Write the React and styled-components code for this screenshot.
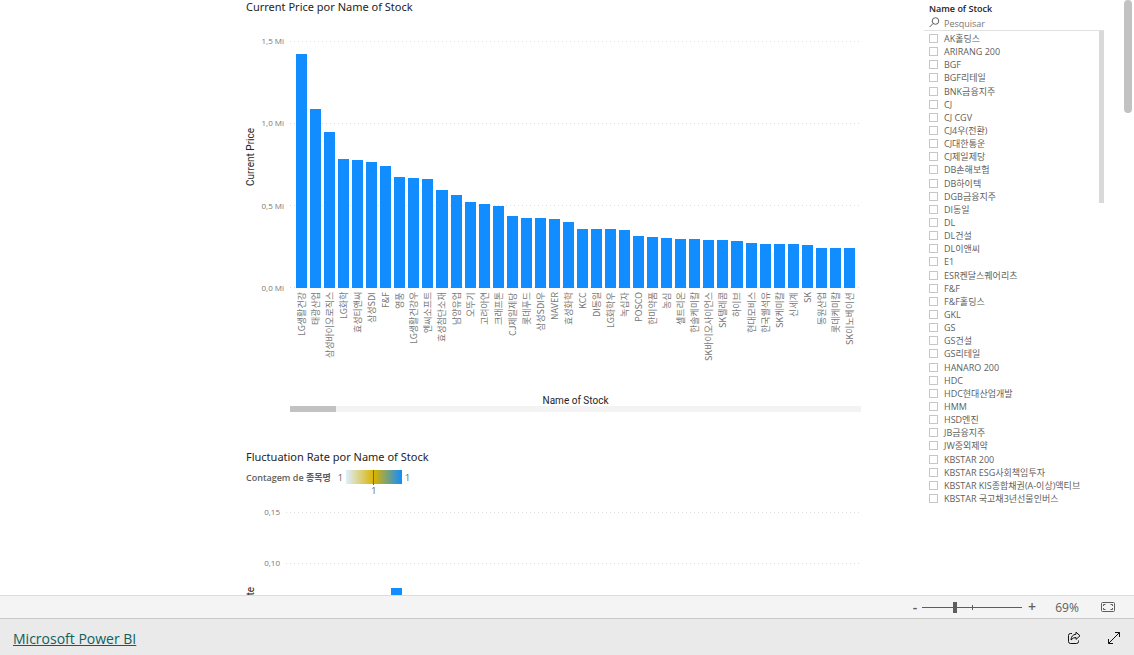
import styled, { createGlobalStyle } from "styled-components";

const prices = [
  ["LG생활건강", 1422],
  ["태광산업", 1088],
  ["삼성바이오로직스", 949],
  ["LG화학", 785],
  ["효성티앤씨", 775],
  ["삼성SDI", 766],
  ["F&F", 744],
  ["영풍", 673],
  ["LG생활건강우", 670],
  ["엔씨소프트", 661],
  ["효성첨단소재", 593],
  ["남양유업", 563],
  ["오뚜기", 520],
  ["고려아연", 508],
  ["크래프톤", 498],
  ["CJ제일제당", 440],
  ["롯데푸드", 425],
  ["삼성SDI우", 423],
  ["NAVER", 422],
  ["효성화학", 403],
  ["KCC", 360],
  ["DI동일", 359],
  ["LG화학우", 357],
  ["녹십자", 351],
  ["POSCO", 317],
  ["한미약품", 308],
  ["농심", 301],
  ["셀트리온", 298],
  ["한솔케미칼", 296],
  ["SK바이오사이언스", 292],
  ["SK텔레콤", 290],
  ["하이브", 286],
  ["현대모비스", 272],
  ["한국쉘석유", 270],
  ["SK케미칼", 269],
  ["신세계", 267],
  ["SK", 263],
  ["동원산업", 244],
  ["롯데케미칼", 243],
  ["SK이노베이션", 241],
];

const stocks = [
  "AK홀딩스",
  "ARIRANG 200",
  "BGF",
  "BGF리테일",
  "BNK금융지주",
  "CJ",
  "CJ CGV",
  "CJ4우(전환)",
  "CJ대한통운",
  "CJ제일제당",
  "DB손해보험",
  "DB하이텍",
  "DGB금융지주",
  "DI동일",
  "DL",
  "DL건설",
  "DL이앤씨",
  "E1",
  "ESR켄달스퀘어리츠",
  "F&F",
  "F&F홀딩스",
  "GKL",
  "GS",
  "GS건설",
  "GS리테일",
  "HANARO 200",
  "HDC",
  "HDC현대산업개발",
  "HMM",
  "HSD엔진",
  "JB금융지주",
  "JW중외제약",
  "KBSTAR 200",
  "KBSTAR ESG사회책임투자",
  "KBSTAR KIS종합채권(A-이상)액티브",
  "KBSTAR 국고채3년선물인버스",
];

const MAX_PRICE = 1500;

const App = () => {
  return (
    <Page>
      <GlobalStyle />
      <Report>
        <Visuals>
          <Title>Current Price por Name of Stock</Title>
          <PriceChart>
            <AxisTitle>Current Price</AxisTitle>
            <Ticks>
              <span>1,5 Mi</span>
              <span>1,0 Mi</span>
              <span>0,5 Mi</span>
              <span>0,0 Mi</span>
            </Ticks>
            <Plot>
              <GridLines>
                <GridLine />
                <GridLine />
                <GridLine />
                <GridLine />
              </GridLines>
              <Bars>
                {prices.map(([name, price]) => (
                  <Bar
                    key={name}
                    style={{ height: `${(price / MAX_PRICE) * 100}%` }}
                  />
                ))}
              </Bars>
            </Plot>
            <Categories>
              {prices.map(([name]) => (
                <Category key={name}>{name}</Category>
              ))}
            </Categories>
            <CategoryTitle>Name of Stock</CategoryTitle>
            <Track>
              <TrackThumb />
            </Track>
          </PriceChart>

          <Title>Fluctuation Rate por Name of Stock</Title>
          <Legend>
            <LegendName>Contagem de 종목명</LegendName>
            <span>1</span>
            <Gradient>
              <Middle>1</Middle>
            </Gradient>
            <span>1</span>
          </Legend>
          <RateChart>
            <RateTitle>Fluctuation Rate</RateTitle>
            <RateTicks>
              <span>0,15</span>
              <span>0,10</span>
            </RateTicks>
            <RatePlot>
              <GridLines>
                <GridLine />
                <GridLine />
                <GridLine />
              </GridLines>
              <RateBar />
            </RatePlot>
          </RateChart>
        </Visuals>

        <Slicer>
          <SlicerTitle>Name of Stock</SlicerTitle>
          <Search>
            <svg width="11" height="11" viewBox="0 0 11 11" fill="none">
              <circle cx="6.5" cy="4" r="3.3" stroke="#605e5c" />
              <path d="M4.2 6.4L0.6 10" stroke="#605e5c" />
            </svg>
            <input type="text" placeholder="Pesquisar" aria-label="Pesquisar" />
          </Search>
          <List>
            {stocks.map((name) => (
              <Option key={name}>
                <input type="checkbox" />
                {name}
              </Option>
            ))}
            <ListThumb />
          </List>
        </Slicer>
        <PageThumb />
      </Report>

      <StatusBar>
        <ZoomButton $width="14px" aria-label="Zoom out">
          -
        </ZoomButton>
        <ZoomRange>
          <input
            type="range"
            min="0"
            max="100"
            defaultValue="32"
            aria-label="Zoom"
          />
        </ZoomRange>
        <ZoomButton $width="20px" aria-label="Zoom in">
          +
        </ZoomButton>
        <ZoomValue>69%</ZoomValue>
        <IconButton aria-label="Fit to page">
          <svg width="14" height="10" viewBox="0 0 14 10" fill="none">
            <rect x="0.5" y="0.5" width="13" height="9" rx="1" stroke="#605e5c" />
            <path
              d="M2.5 4V2.5H4.5M9.5 2.5H11.5V4M11.5 6V7.5H9.5M4.5 7.5H2.5V6"
              stroke="#605e5c"
            />
          </svg>
        </IconButton>
      </StatusBar>

      <Footer>
        <a href="#powerbi">Microsoft Power BI</a>
        <Actions>
          <IconButton aria-label="Share">
            <svg width="14" height="14" viewBox="0 0 14 14" fill="none" stroke="#111">
              <path d="M5 2.5H3.5Q1.5 2.5 1.5 4.5V10.5Q1.5 12.5 3.5 12.5H9.5Q11.5 12.5 11.5 10.5V9.5" />
              <path
                d="M9 1.2L13 4.8L9 8.4V6.5Q6 6.3 4 9Q4.3 3.7 9 3.2Z"
                strokeLinejoin="round"
              />
            </svg>
          </IconButton>
          <IconButton aria-label="Full screen">
            <svg width="14" height="14" viewBox="0 0 14 14" fill="none" stroke="#111">
              <path d="M1.5 12.5L12.5 1.5M8 1.5H12.5V6M1.5 8V12.5H6" />
            </svg>
          </IconButton>
        </Actions>
      </Footer>
    </Page>
  );
};

export default App;

const GlobalStyle = createGlobalStyle`
  * {
    box-sizing: border-box;
  }
  body {
    margin: 0;
    background: #fff;
    color: #605e5c;
    font-family: "Open Sans", "Noto Sans CJK KR", sans-serif;
    font-size: 8px;
  }
  button {
    border: none;
    background: none;
    padding: 0;
    color: inherit;
    font-family: inherit;
    cursor: pointer;
  }
`;

const Page = styled.div`
  display: flex;
  flex-direction: column;
  height: 100vh;
`;

const Report = styled.main`
  position: relative;
  flex: 1;
  min-height: 0;
  overflow: hidden;
  display: grid;
  grid-template-columns: minmax(0, 1fr) 180px;
  column-gap: 63px;
  padding: 0 30px 0 246px;
`;

const Visuals = styled.section`
  min-width: 0;
`;

const Title = styled.h2`
  margin: 0;
  height: 14px;
  line-height: 14px;
  font-family: "Noto Sans", sans-serif;
  font-size: 11px;
  font-weight: 400;
  color: #252423;
`;

const PriceChart = styled.div`
  display: grid;
  grid-template-columns: 10px 28px minmax(0, 1fr);
  grid-template-rows: 247px 106px 12px 6px;
  column-gap: 3px;
  padding-top: 27px;
  margin-bottom: 38px;
`;

const AxisTitle = styled.div`
  grid-row: 1;
  align-self: center;
  justify-self: center;
  margin-bottom: 16px;
  writing-mode: vertical-rl;
  transform: rotate(180deg);
  font-family: Roboto, sans-serif;
  font-size: 10px;
  line-height: 10px;
  white-space: nowrap;
  color: #252423;
`;

const Ticks = styled.div`
  display: flex;
  flex-direction: column;
  justify-content: space-between;
  margin: -5px 0;
  padding-right: 3px;
  line-height: 10px;
  text-align: right;
  white-space: nowrap;
  color: #777;
`;

const Plot = styled.div`
  position: relative;
`;

const GridLines = styled.div`
  position: absolute;
  inset: 0;
  display: flex;
  flex-direction: column;
  justify-content: space-between;
`;

const GridLine = styled.div`
  height: 1px;
  background: repeating-linear-gradient(
    to right,
    #dedede 0 1px,
    transparent 1px 4px
  );
`;

const Bars = styled.div`
  position: relative;
  height: 100%;
  display: flex;
  align-items: flex-end;
  gap: 3px;
  padding: 0 6px;
`;

const Bar = styled.div`
  flex: 1;
  background: #118dff;
`;

const Categories = styled.div`
  grid-column: 3;
  display: flex;
  gap: 3px;
  padding: 4px 6px 0;
`;

const Category = styled.div`
  flex: 1;
  min-width: 0;
  display: flex;
  align-items: center;
  justify-content: flex-end;
  writing-mode: vertical-rl;
  text-orientation: sideways;
  transform: rotate(180deg);
  font-family: "Noto Sans CJK KR", sans-serif;
  font-size: 9px;
  line-height: 11px;
  white-space: nowrap;
  color: #777;
`;

const CategoryTitle = styled.div`
  grid-column: 3;
  text-align: center;
  font-family: Roboto, sans-serif;
  font-size: 10px;
  line-height: 14px;
  color: #252423;
`;

const Track = styled.div`
  grid-column: 3;
  background: #f3f3f3;
`;

const TrackThumb = styled.div`
  width: 8%;
  height: 100%;
  background: #c2c2c2;
`;

const Legend = styled.div`
  display: flex;
  align-items: center;
  gap: 3px;
  height: 14px;
  margin-top: 6px;
  font-size: 9px;
`;

const LegendName = styled.span`
  margin-right: 4px;
  font-weight: 600;
`;

const Gradient = styled.div`
  position: relative;
  width: 56px;
  height: 14px;
  background: linear-gradient(to right, #deefff, #d9b300 50%, #118dff);
`;

const Middle = styled.span`
  position: absolute;
  left: 50%;
  top: 0;
  width: 10px;
  margin-left: -5px;
  padding-top: 15px;
  line-height: 12px;
  text-align: center;
  background: linear-gradient(#7a6a20, #7a6a20) center top / 1px 15px no-repeat;
`;

const RateChart = styled.div`
  display: grid;
  grid-template-columns: 10px 24px minmax(0, 1fr);
  grid-template-rows: 103px;
  column-gap: 3px;
  margin-top: 28px;
`;

const RateTitle = styled(AxisTitle)`
  align-self: start;
  margin: 75px 0 0;
`;

const RateTicks = styled(Ticks)`
  height: 61px;
`;

const RatePlot = styled(Plot)`
  display: flex;
  align-items: flex-end;
  padding-left: 105px;
`;

const RateBar = styled(Bar)`
  position: relative;
  flex: none;
  width: 11px;
  height: 27px;
`;

const Slicer = styled.aside`
  padding-top: 3px;
`;

const SlicerTitle = styled.h3`
  margin: 0;
  padding-left: 5px;
  font-size: 9px;
  font-weight: 600;
  line-height: 12px;
  color: #252423;
`;

const Search = styled.div`
  display: flex;
  align-items: center;
  gap: 4px;
  height: 16px;
  padding-left: 5px;
  border-bottom: 1px solid #e1e1e1;
  input {
    flex: 1;
    min-width: 0;
    border: none;
    padding: 2px 0 0;
    background: none;
    outline: none;
    font-family: inherit;
    font-size: 9px;
    line-height: 12px;
  }
  input::placeholder {
    color: #777;
  }
`;

const List = styled.div`
  position: relative;
  display: grid;
  grid-auto-rows: 1fr;
  height: 474px;
  padding: 1px 0 0 5px;
`;

const Option = styled.label`
  display: flex;
  align-items: center;
  gap: 6px;
  font-size: 9px;
  line-height: 13px;
  white-space: nowrap;
  input {
    appearance: none;
    width: 9px;
    height: 9px;
    margin: 0;
    border: 1px solid #c8c6c4;
  }
`;

const ListThumb = styled.div`
  position: absolute;
  top: 0;
  right: 0;
  width: 5px;
  height: 172px;
  background: #d9d9d9;
`;

const PageThumb = styled.div`
  position: absolute;
  top: 0;
  right: 2px;
  width: 8px;
  height: 113px;
  border-radius: 4px;
  background: #c2c2c2;
`;

const StatusBar = styled.div`
  display: flex;
  align-items: center;
  justify-content: flex-end;
  height: 23px;
  padding-right: 19px;
  border-top: 1px solid #dcdcdc;
  background: #f4f4f4;
`;

const ZoomButton = styled.button`
  width: ${(props) => props.$width};
  font-size: 14px;
  font-weight: 600;
  line-height: 20px;
`;

const ZoomRange = styled.div`
  display: flex;
  width: 100px;
  background: linear-gradient(#605e5c, #605e5c) center / 1px 5px no-repeat;
  input {
    appearance: none;
    width: 100%;
    height: 11px;
    margin: 0;
    background: linear-gradient(#605e5c, #605e5c) center / 100% 1px no-repeat;
  }
  input::-webkit-slider-thumb {
    appearance: none;
    width: 4px;
    height: 11px;
    background: #605e5c;
  }
`;

const ZoomValue = styled.span`
  width: 50px;
  margin-right: 9px;
  text-align: center;
  font-size: 12px;
`;

const IconButton = styled.button`
  display: flex;
  align-items: center;
  justify-content: center;
  width: 14px;
`;

const Footer = styled.footer`
  display: flex;
  align-items: center;
  justify-content: space-between;
  height: 37px;
  padding: 2px 13px 0;
  border-top: 1px solid #c8c8c8;
  background: #eaeaea;
  a {
    color: #0f5f5c;
    font-size: 14px;
  }
`;

const Actions = styled.div`
  display: flex;
  gap: 26px;
`;
